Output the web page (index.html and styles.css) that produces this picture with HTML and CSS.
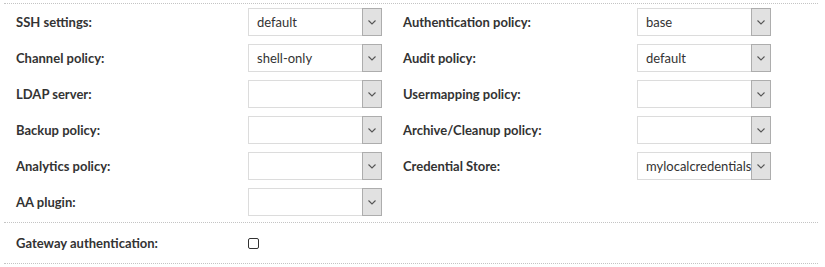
FILE: index.html
```html
<!DOCTYPE html>
<html>

<head>
  <title>Connection policy</title>
  <link rel="stylesheet" href="styles.css">
</head>

<body>
  <div class="panel">
    <!-- Policies -->
    <div class="policy-grid">
      <div class="field">
        <label class="field-label">SSH settings:</label>
        <div class="select"><span class="select-value">default</span><span class="select-arrow"><svg width="8" height="5" viewBox="0 0 8 5"><path d="M0.5 0.5 L4 4 L7.5 0.5" fill="none" stroke="#555" stroke-width="1.1"/></svg></span></div>
      </div>
      <div class="field">
        <label class="field-label">Authentication policy:</label>
        <div class="select"><span class="select-value">base</span><span class="select-arrow"><svg width="8" height="5" viewBox="0 0 8 5"><path d="M0.5 0.5 L4 4 L7.5 0.5" fill="none" stroke="#555" stroke-width="1.1"/></svg></span></div>
      </div>
      <div class="field">
        <label class="field-label">Channel policy:</label>
        <div class="select"><span class="select-value">shell-only</span><span class="select-arrow"><svg width="8" height="5" viewBox="0 0 8 5"><path d="M0.5 0.5 L4 4 L7.5 0.5" fill="none" stroke="#555" stroke-width="1.1"/></svg></span></div>
      </div>
      <div class="field">
        <label class="field-label">Audit policy:</label>
        <div class="select"><span class="select-value">default</span><span class="select-arrow"><svg width="8" height="5" viewBox="0 0 8 5"><path d="M0.5 0.5 L4 4 L7.5 0.5" fill="none" stroke="#555" stroke-width="1.1"/></svg></span></div>
      </div>
      <div class="field">
        <label class="field-label">LDAP server:</label>
        <div class="select"><span class="select-value"></span><span class="select-arrow"><svg width="8" height="5" viewBox="0 0 8 5"><path d="M0.5 0.5 L4 4 L7.5 0.5" fill="none" stroke="#555" stroke-width="1.1"/></svg></span></div>
      </div>
      <div class="field">
        <label class="field-label">Usermapping policy:</label>
        <div class="select"><span class="select-value"></span><span class="select-arrow"><svg width="8" height="5" viewBox="0 0 8 5"><path d="M0.5 0.5 L4 4 L7.5 0.5" fill="none" stroke="#555" stroke-width="1.1"/></svg></span></div>
      </div>
      <div class="field">
        <label class="field-label">Backup policy:</label>
        <div class="select"><span class="select-value"></span><span class="select-arrow"><svg width="8" height="5" viewBox="0 0 8 5"><path d="M0.5 0.5 L4 4 L7.5 0.5" fill="none" stroke="#555" stroke-width="1.1"/></svg></span></div>
      </div>
      <div class="field">
        <label class="field-label">Archive/Cleanup policy:</label>
        <div class="select"><span class="select-value"></span><span class="select-arrow"><svg width="8" height="5" viewBox="0 0 8 5"><path d="M0.5 0.5 L4 4 L7.5 0.5" fill="none" stroke="#555" stroke-width="1.1"/></svg></span></div>
      </div>
      <div class="field">
        <label class="field-label">Analytics policy:</label>
        <div class="select"><span class="select-value"></span><span class="select-arrow"><svg width="8" height="5" viewBox="0 0 8 5"><path d="M0.5 0.5 L4 4 L7.5 0.5" fill="none" stroke="#555" stroke-width="1.1"/></svg></span></div>
      </div>
      <div class="field">
        <label class="field-label">Credential Store:</label>
        <div class="select"><span class="select-value">mylocalcredentialstore</span><span class="select-arrow"><svg width="8" height="5" viewBox="0 0 8 5"><path d="M0.5 0.5 L4 4 L7.5 0.5" fill="none" stroke="#555" stroke-width="1.1"/></svg></span></div>
      </div>
      <div class="field">
        <label class="field-label">AA plugin:</label>
        <div class="select"><span class="select-value"></span><span class="select-arrow"><svg width="8" height="5" viewBox="0 0 8 5"><path d="M0.5 0.5 L4 4 L7.5 0.5" fill="none" stroke="#555" stroke-width="1.1"/></svg></span></div>
      </div>
    </div>

    <!-- Gateway -->
    <div class="gateway-row">
      <label class="field-label">Gateway authentication:</label>
      <span class="checkbox"></span>
    </div>
  </div>
</body>

</html>
```

FILE: styles.css
```css
body {
  margin: 0;
  background-color: #fff;
  font-family: Lato, "Liberation Sans", sans-serif;
  font-size: 13px;
  color: #333;
}

.panel {
  margin: 3px 7px 0 4px;
  border-top: 1px dotted #c4c4c4;
}

.policy-grid {
  display: grid;
  grid-template-columns: 387px 387px;
  row-gap: 8px;
  padding: 4px 0 6px 12px;
  border-bottom: 1px dotted #c4c4c4;
}

.field {
  display: flex;
  align-items: center;
}

.field-label {
  width: 232px;
  font-weight: bold;
}

.field:nth-child(even) .field-label {
  width: 234px;
}

.select {
  display: flex;
  width: 134px;
  height: 28px;
  box-sizing: border-box;
  border: 1px solid #dcdcdc;
  background-color: #fff;
}

.select-value {
  flex: 1;
  overflow: hidden;
  white-space: nowrap;
  padding-left: 8px;
  line-height: 26px;
}

.select-arrow {
  display: flex;
  align-items: center;
  justify-content: center;
  width: 18px;
  margin: -1px -1px -1px 0;
  border: 1px solid #adadad;
  background-color: #e1e1e1;
}

.gateway-row {
  display: flex;
  align-items: center;
  height: 40px;
  padding-left: 12px;
  border-bottom: 1px dotted #c4c4c4;
}

.checkbox {
  width: 9px;
  height: 9px;
  border: 1.5px solid #333;
  border-radius: 2px;
}
```
